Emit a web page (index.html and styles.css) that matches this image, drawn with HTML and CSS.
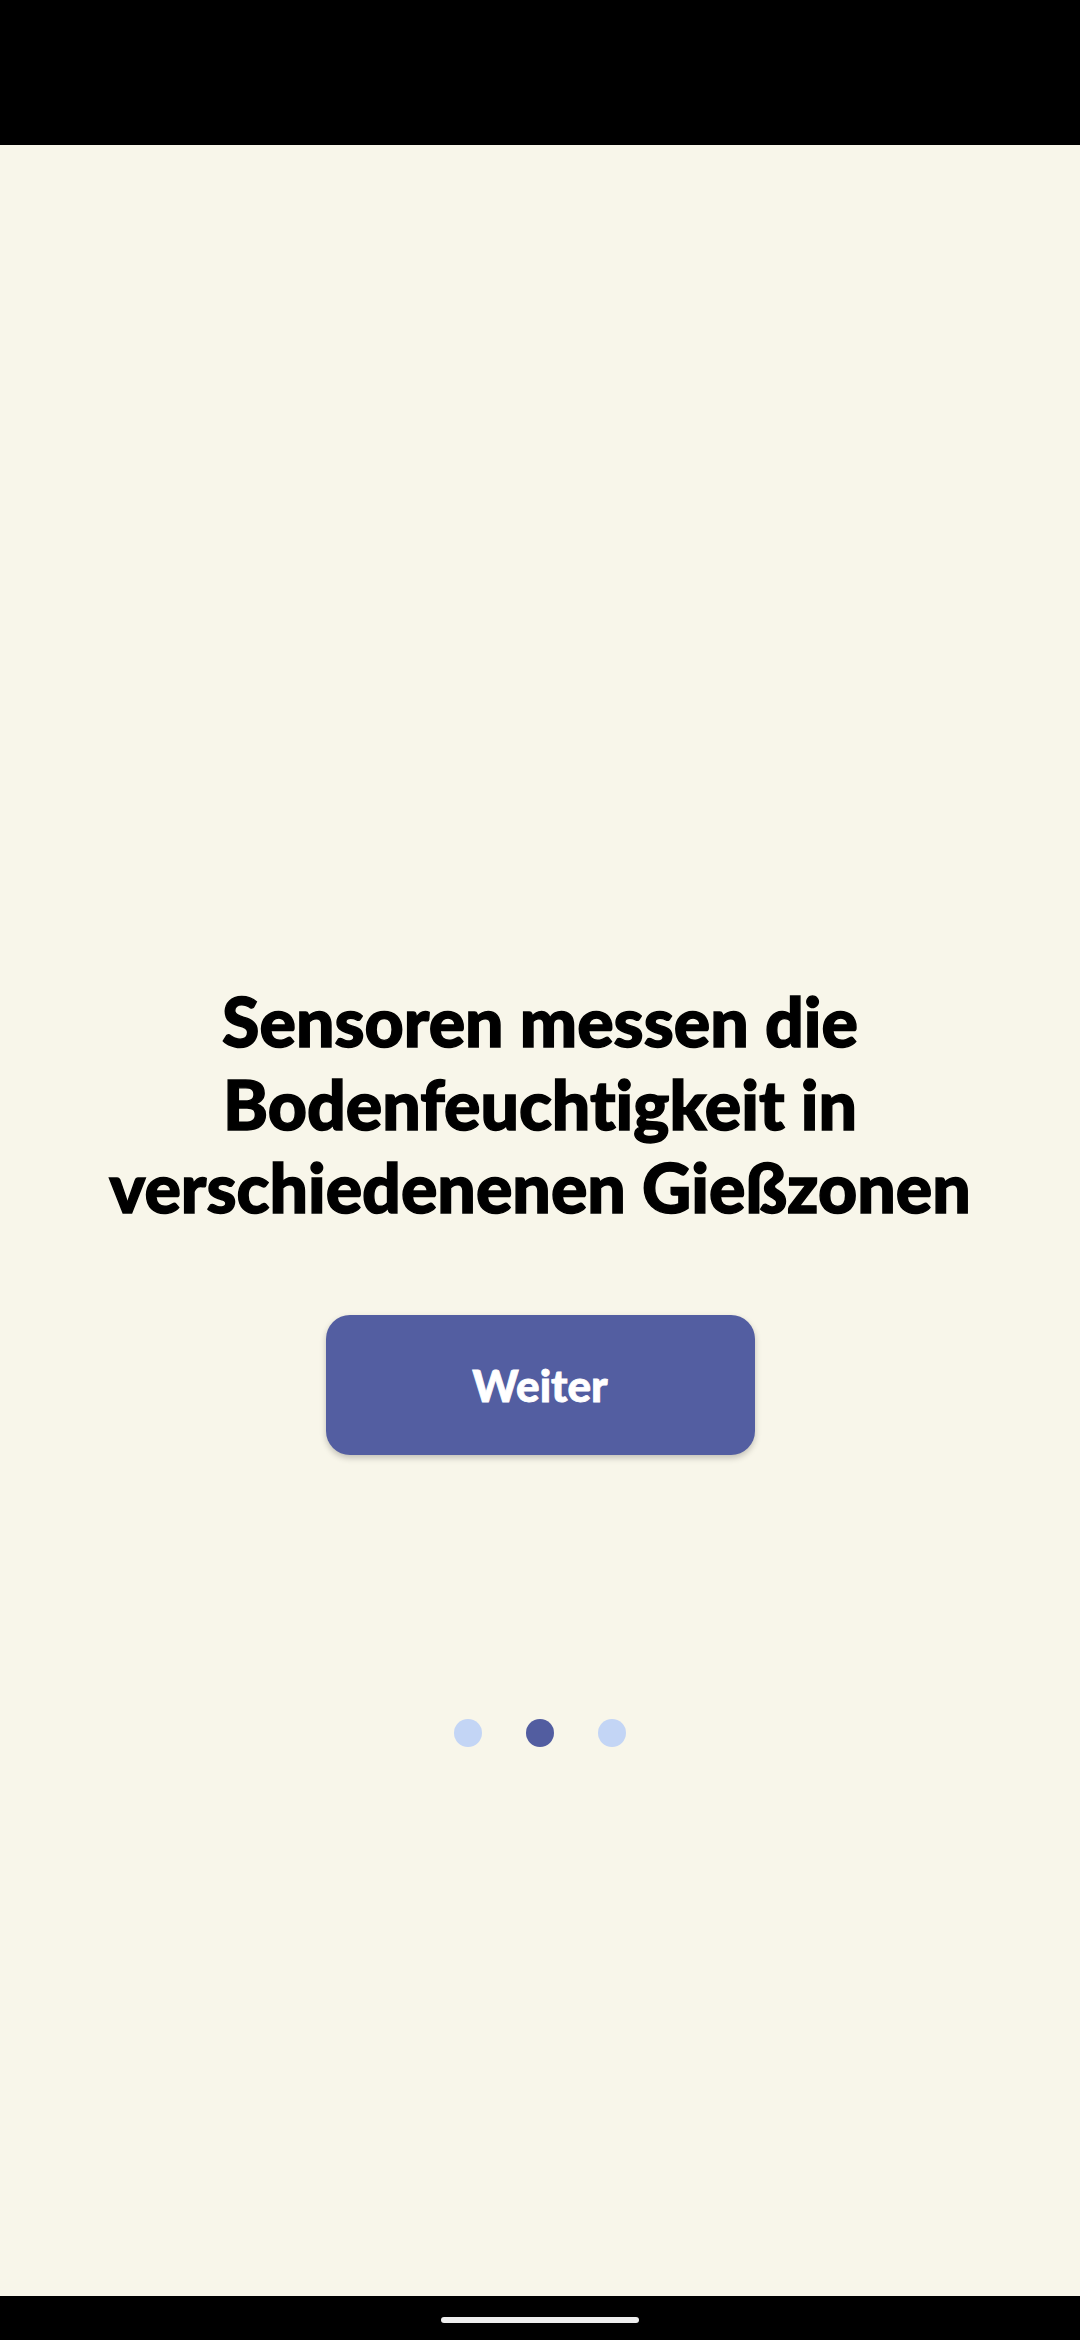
FILE: index.html
```html
<!DOCTYPE html>
<html lang="de">
<head>
<meta charset="utf-8">
<title>Onboarding</title>
<link rel="stylesheet" href="styles.css">
</head>
<body>
<div class="screen">
  <div class="status-bar"></div>
  <main class="content">
    <h1 class="title">Sensoren messen die<br>Bodenfeuchtigkeit in<br>verschiedenenen Gießzonen</h1>
    <button class="next-btn" type="button">Weiter</button>
    <div class="dots">
      <span class="dot"></span>
      <span class="dot dot-active"></span>
      <span class="dot"></span>
    </div>
  </main>
  <div class="nav-bar"><span class="home-indicator"></span></div>
</div>
</body>
</html>
```

FILE: styles.css
```css
* { box-sizing: border-box; }
html, body {
  margin: 0;
  padding: 0;
  background: #000;
}
.screen {
  width: 1080px;
  height: 2340px;
  display: flex;
  flex-direction: column;
  font-family: "Lato", "Noto Sans", sans-serif;
  font-variant-ligatures: none;
}
.status-bar {
  height: 145px;
  background: #000;
  flex: none;
}
.content {
  flex: 1;
  background: #f8f6ea;
  display: flex;
  flex-direction: column;
  align-items: center;
  padding-top: 834px;
}
.title {
  margin: 0;
  font-size: 68px;
  line-height: 83px;
  font-weight: 900;
  color: #000;
  text-align: center;
  -webkit-text-stroke: 1.4px #000;
  font-variant-ligatures: none;
}
.next-btn {
  margin-top: 87px;
  width: 429px;
  height: 140px;
  border: none;
  border-radius: 24px;
  background: #535ea1;
  color: #fff;
  font-family: "Lato", "Noto Sans", sans-serif;
  font-size: 44px;
  font-weight: 900;
  -webkit-text-stroke: 0.8px #fff;
  box-shadow: 0 3px 6px rgba(0, 0, 0, 0.22);
  padding: 0;
}
.dots {
  margin-top: 264px;
  display: flex;
  gap: 44px;
}
.dot {
  width: 28px;
  height: 28px;
  border-radius: 50%;
  background: #c3d5f5;
}
.dot-active {
  background: #525da0;
}
.nav-bar {
  height: 44px;
  flex: none;
  background: #000;
  display: flex;
  justify-content: center;
  padding-top: 21px;
}
.home-indicator {
  width: 198px;
  height: 6px;
  border-radius: 3px;
  background: #eeeeee;
}
```
